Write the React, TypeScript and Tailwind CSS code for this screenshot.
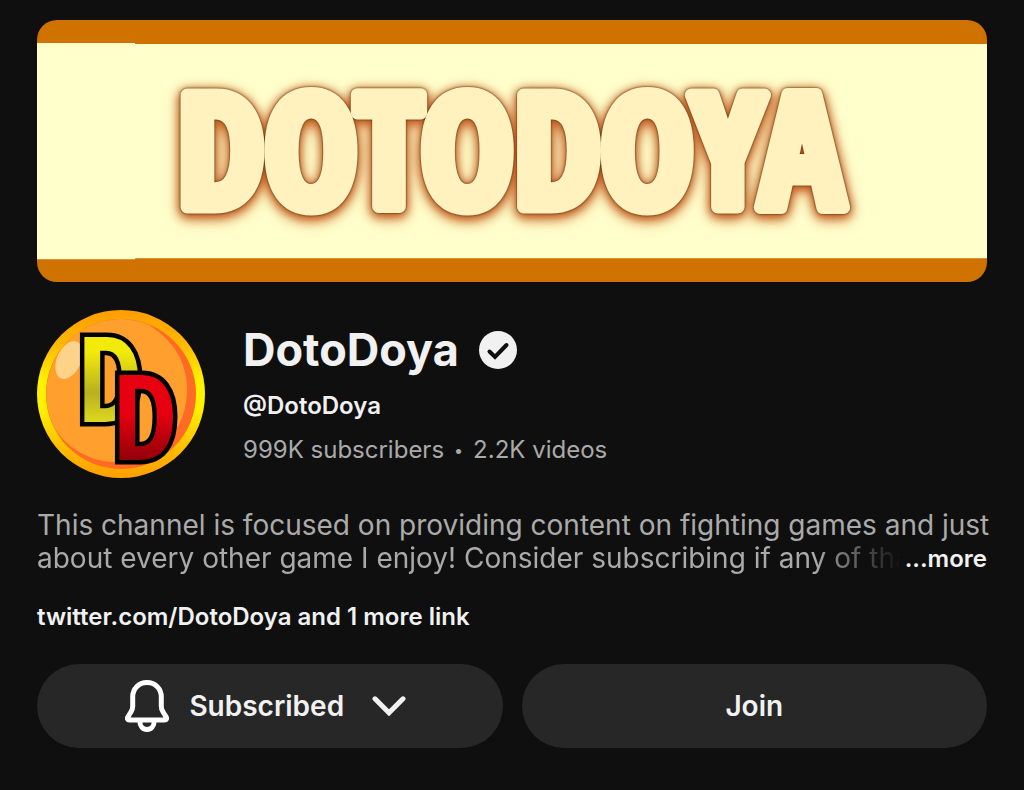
const buttonClass =
  'flex h-[84px] flex-1 items-center justify-center rounded-full bg-[#272727] text-[28px] font-semibold text-[#f1f1f1]';

function Banner() {
  return (
    <svg viewBox="0 0 949 262" className="block w-full rounded-[20px]" role="img" aria-label="DotoDoya banner">
      <rect width="949" height="262" fill="#cf7200" />
      <rect y="24" width="949" height="214" fill="#ffffcc" />
      <rect y="23" width="98" height="216" fill="#ffffcc" />
      <text
        x="473"
        y="187"
        textAnchor="middle"
        fontSize="156"
        fill="#fff2bf"
        stroke="#fff2bf"
        strokeWidth="13"
        strokeLinejoin="round"
        className="font-['Open_Sans_Condensed','Roboto_Condensed',sans-serif] font-black [filter:drop-shadow(0_0_1px_#3a2a08)_drop-shadow(0_2px_5px_#b9531a)_drop-shadow(0_3px_6px_#d98a4a)]"
      >
        DOTODOYA
      </text>
    </svg>
  );
}

function Avatar() {
  return (
    <svg viewBox="0 0 168 168" className="size-[168px] shrink-0" role="img" aria-label="DotoDoya avatar">
      <defs>
        <linearGradient id="rim" x1="0" y1="0" x2="0" y2="1">
          <stop offset="0" stopColor="#ff9d00" />
          <stop offset="0.2" stopColor="#ffb800" />
          <stop offset="0.42" stopColor="#fff200" />
          <stop offset="0.58" stopColor="#fff200" />
          <stop offset="0.85" stopColor="#ffb800" />
          <stop offset="1" stopColor="#ff9d00" />
        </linearGradient>
        <linearGradient id="yellow" x1="0" y1="0" x2="0" y2="1">
          <stop offset="0.35" stopColor="#f2ea0a" />
          <stop offset="0.6" stopColor="#b9b020" />
          <stop offset="0.8" stopColor="#e0dc20" />
        </linearGradient>
        <linearGradient id="red" x1="0" y1="0" x2="0" y2="1">
          <stop offset="0.5" stopColor="#e60010" />
          <stop offset="0.8" stopColor="#8c0008" />
        </linearGradient>
      </defs>
      <circle cx="84" cy="84" r="84" fill="url(#rim)" />
      <circle cx="84" cy="84" r="75" fill="#ff6a24" />
      <path
        d="M84 9a75 75 0 0 0-66 110c14 22 40 35 68 33 40-4 64-36 64-72 0-28-14-50-38-65A75 75 0 0 0 84 9z"
        fill="#ffa02e"
      />
      <ellipse cx="32" cy="50" rx="12" ry="20" transform="rotate(24 32 50)" fill="#ffd28a" />
      <g
        fontSize="118"
        stroke="#000"
        strokeWidth="9"
        paintOrder="stroke"
        className="font-['Open_Sans_Condensed','Roboto_Condensed',sans-serif] font-black"
      >
        <text x="40" y="112" fill="url(#yellow)">
          D
        </text>
        <text x="75" y="150" fill="url(#red)">
          D
        </text>
      </g>
    </svg>
  );
}

function VerifiedBadge() {
  return (
    <svg viewBox="0 0 38 38" className="size-[38px]" role="img" aria-label="Verified">
      <circle cx="19" cy="19" r="19" fill="#f1f1f1" />
      <path d="M10.500 20.500l5.500 5.500L27.500 14" fill="none" stroke="#0f0f0f" strokeWidth="4" strokeLinecap="round" />
    </svg>
  );
}

function BellIcon() {
  return (
    <svg viewBox="0 0 44 52" className="h-[52px] w-11" fill="none" stroke="#fff" strokeWidth="5" strokeLinejoin="round">
      <path d="M22 2.600C13.500 2.600 7.700 9 7.700 17v9.500c0 2-.5 3.400-1.600 5.200l-3.200 5.200c-1 1.600-.3 3.100 1.500 3.100h35.200c1.800 0 2.500-1.500 1.500-3.100l-3.200-5.200c-1.100-1.800-1.600-3.200-1.600-5.200V17c0-8-5.800-14.400-14.300-14.400z" />
      <path d="M14.800 41c0 5 3 8.400 7.200 8.400s7.200-3.400 7.200-8.400" />
    </svg>
  );
}

function ChevronIcon() {
  return (
    <svg viewBox="0 0 34 20" className="h-5 w-[34px]" fill="none" stroke="#f1f1f1" strokeWidth="5" strokeLinecap="round">
      <path d="M3 2.800l14 14L31 2.800" />
    </svg>
  );
}

export default function App() {
  return (
    <main className="min-h-screen bg-[#0f0f0f] px-[37px] pt-5 pb-10 font-['Inter','Liberation_Sans',sans-serif] text-[#f1f1f1]">
      <Banner />

      <header className="mt-7 flex items-center gap-[38px]">
        <Avatar />
        <div className="flex min-w-0 flex-col gap-3.5">
          <div className="flex items-center gap-5">
            <h1 className="text-[45px] leading-[54px] font-bold">DotoDoya</h1>
            <VerifiedBadge />
          </div>
          <p className="text-[24px] leading-[30px] font-semibold">@DotoDoya</p>
          <p className="flex gap-2.5 text-[24px] leading-[30px] text-[#aaa]">
            <span>999K subscribers</span>
            <span className="text-[16px]">•</span>
            <span>2.2K videos</span>
          </p>
        </div>
      </header>

      <div className="mt-[31px] text-[28px] leading-[33px] whitespace-nowrap text-[#aaa]">
        <p>This channel is focused on providing content on fighting games and just</p>
        <div className="flex">
          <p className="min-w-0 flex-1 [mask-image:linear-gradient(to_right,#000_calc(100%-90px),transparent_calc(100%-4px))]">
            about every other game I enjoy! Consider subscribing if any of tha
          </p>
          <button type="button" className="text-[24px] leading-[33px] font-semibold text-[#f1f1f1]">
            ...more
          </button>
        </div>
      </div>

      <a href="#links" className="mt-[27px] block text-[24px] leading-[30px] font-semibold">
        twitter.com/DotoDoya and 1 more link
      </a>

      <div className="mt-8 flex gap-[19px]">
        <button type="button" className={buttonClass}>
          <BellIcon />
          <span className="mx-5">Subscribed</span>
          <span className="px-2">
            <ChevronIcon />
          </span>
        </button>
        <button type="button" className={buttonClass}>
          Join
        </button>
      </div>
    </main>
  );
}
